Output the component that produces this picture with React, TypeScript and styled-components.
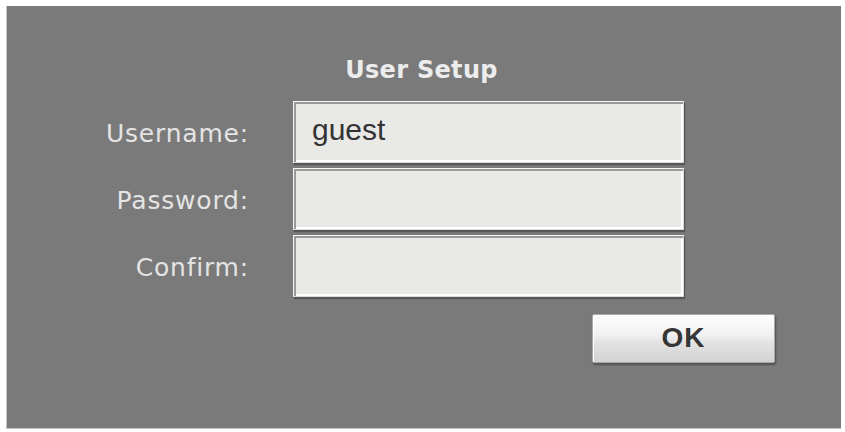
import * as React from "react";
import styled, { createGlobalStyle } from "styled-components";

const GlobalStyle = createGlobalStyle`
  html, body {
    margin: 0;
    padding: 0;
    background: #ffffff;
  }
`;

const Screen = styled.div`
  width: 845px;
  height: 432px;
  padding: 6px 4px 3px 6px;
  box-sizing: border-box;
  background: #ffffff;
`;

const Panel = styled.div`
  height: 100%;
  box-sizing: border-box;
  background: #7a7a7a;
  border-left: 1px solid #c4c4c4;
  border-bottom: 1px solid #c4c4c4;
  padding: 50px 65px 0 81px;
  display: flex;
  flex-direction: column;
`;

const Title = styled.h1`
  margin: 0 0 17px;
  padding-right: 21px;
  text-align: center;
  font-family: "DejaVu Sans", Verdana, sans-serif;
  font-weight: bold;
  font-size: 24px;
  line-height: 28px;
  letter-spacing: 0.3px;
  color: #ececec;
`;

const Form = styled.div`
  display: grid;
  grid-template-columns: 161px 391px;
  grid-auto-rows: 62px;
  column-gap: 44px;
  row-gap: 5px;
`;

const Label = styled.label`
  align-self: center;
  justify-self: end;
  padding-top: 3px;
  white-space: nowrap;
  font-family: "DejaVu Sans", Verdana, sans-serif;
  font-size: 25px;
  letter-spacing: 0.8px;
  color: #e4e4e4;
`;

const Field = styled.input`
  box-sizing: border-box;
  width: 100%;
  height: 100%;
  margin: 0;
  padding: 0 0 4px 18px;
  background: #e9e9e6;
  border: 1px solid #f6f6f4;
  border-right-color: #d8d8d6;
  border-bottom-color: #dcdcda;
  box-shadow: inset 2px 2px 0 #9a9a98, inset -2px -2px 0 #ffffff,
    1px 2px 1px rgba(40, 40, 40, 0.45);
  font-family: "Liberation Sans", Arial, sans-serif;
  font-size: 30px;
  color: #333333;
  outline: none;
`;

const Actions = styled.div`
  display: flex;
  justify-content: flex-end;
  margin-top: 17px;
  padding-right: 1px;
`;

const Button = styled.button`
  width: 183px;
  height: 49px;
  padding: 0 0 2px;
  border: 1px solid #a8a8a8;
  border-radius: 2px;
  background: linear-gradient(#fdfdfd, #f2f2f2 40%, #e2e2e2 60%, #d2d2d2);
  box-shadow: inset 1px 1px 0 #ffffff, 1px 2px 2px rgba(30, 30, 30, 0.45);
  font-family: "Liberation Sans", Arial, sans-serif;
  font-weight: bold;
  font-size: 28px;
  letter-spacing: 1px;
  color: #353535;
  cursor: pointer;
`;

const App = () => (
  <Screen>
    <GlobalStyle />
    <Panel>
      <Title>User Setup</Title>
      <Form>
        <Label>Username:</Label>
        <Field defaultValue="guest" />
        <Label>Password:</Label>
        <Field type="password" />
        <Label>Confirm:</Label>
        <Field type="password" />
      </Form>
      <Actions>
        <Button>OK</Button>
      </Actions>
    </Panel>
  </Screen>
);

export default App;
